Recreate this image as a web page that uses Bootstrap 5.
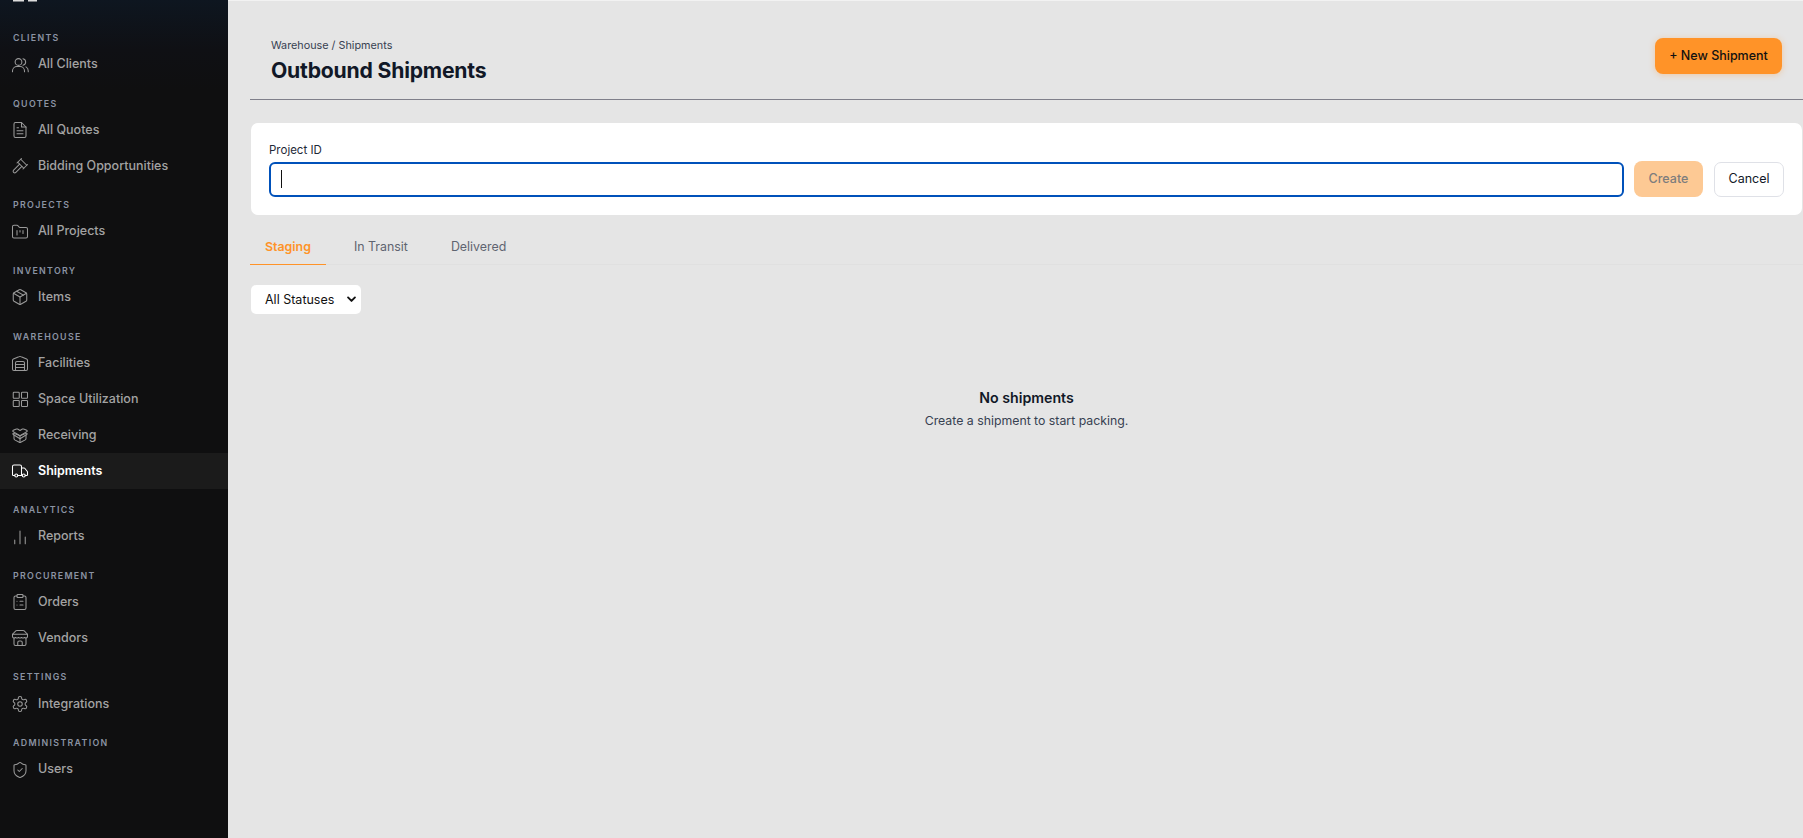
<!DOCTYPE html>
<html lang="en">
<head>
    <meta charset="UTF-8">
    <meta name="viewport" content="width=device-width, initial-scale=1.0">
    <title>Outbound Shipments</title>
    <link href="https://cdn.jsdelivr.net/npm/bootstrap@5.3.0/dist/css/bootstrap.min.css" rel="stylesheet">
    <style>
        html, body { height: 100%; }
        body { font-family: Inter, "Liberation Sans", sans-serif; background: #e5e5e5; color: #111827; overflow: hidden; }
        .app-side { width: 228px; height: 100vh; background: linear-gradient(180deg, #0e1620 0, #0f1014 50px, #0f0f10 90px); }
        .side-brand { height: 30px; padding-left: 13px; }
        .side-group { margin-bottom: 13.15px; }
        .side-label { height: 16.5px; line-height: 15px; padding-left: 13px; font-size: 8.8px; font-weight: 600; letter-spacing: .15em; color: #8b93a3; text-transform: uppercase; }
        .side-item { height: 36px; padding-left: 11px; gap: 9px; font-size: 12.5px; font-weight: 500; color: #a3a3a3; text-decoration: none; }
        .side-item svg { width: 18px; height: 18px; flex: none; fill: none; stroke: currentColor; stroke-width: 1.4; stroke-linecap: round; stroke-linejoin: round; color: #9a9a9a; }
        .side-item.is-active { background: #1b1b1b; color: #fff; font-weight: 600; }
        .side-item.is-active svg { color: #fff; }
        .app-main { padding: 1px 0 0 22px; border-top: 1px solid #f2f2f2; min-width: 0; }
        .page-head { height: 98px; padding: 36px 21px 0 21px; border-bottom: 1px solid #7f7f8a; }
        .crumbs { font-size: 10.8px; line-height: 16px; margin-bottom: 1px; color: #374151; }
        .page-title { font-size: 21.2px; font-weight: 700; line-height: 30px; color: #111827; margin: 0; letter-spacing: -.01em; }
        .btn-ship { width: 127px; height: 36px; margin-top: 0; padding: 0; background: #ff9328; border: 0; border-radius: 8px; color: #111; font-size: 12.5px; font-weight: 500; box-shadow: 0 1px 6px rgba(255, 147, 40, .35); }
        .btn-ship:hover { background: #ff9328; color: #111; }
        .create-box { margin: 23px 1px 0 1px; height: 92px; padding: 19px 18px 0 18px; background: #fff; border-radius: 7px; }
        .create-box label { display: block; font-size: 11.5px; line-height: 16px; margin-bottom: 3px; color: #1f2937; }
        .input-wrap { flex: 1 1 auto; position: relative; }
        .input-wrap .form-control { height: 35px; border: 2px solid #0051ba; border-radius: 6px; box-shadow: none; }
        .fake-caret { position: absolute; left: 12px; top: 8px; width: 1px; height: 18px; background: #111; }
        .btn-create { width: 69px; height: 36px; margin-left: 10px; padding: 0; background: #fdc994; border: 0; border-radius: 8px; color: #7d7d7d; font-size: 12.5px; font-weight: 500; }
        .btn-create:disabled { background: #fdc994; color: #7d7d7d; opacity: 1; }
        .btn-cancel { width: 70px; height: 35px; margin-left: 11px; padding: 0; background: #fff; border: 1px solid #dfe1e7; border-radius: 7px; color: #111827; font-size: 12.5px; }
        .tab-row { margin-top: 14px; height: 36px; border-bottom: 1px solid #e0e0e0; }
        .tab-link { height: 36px; padding: 0 15px; font-size: 12.4px; line-height: 35px; font-weight: 400; color: #5f6470; text-decoration: none; margin-right: 13px; }
        .tab-link.is-on { color: #ff9328; font-weight: 600; border-bottom: 1px solid #ff9328; }
        .status-pick { display: block; width: 110px; height: 29px; margin: 20px 0 0 1px; padding: 2px 0 0 14px; border: 0; border-radius: 5px; font-size: 12.5px; color: #111; box-shadow: none;
            background-image: url("data:image/svg+xml,%3csvg xmlns='http://www.w3.org/2000/svg' viewBox='0 0 16 16'%3e%3cpath fill='none' stroke='%23111' stroke-linecap='round' stroke-linejoin='round' stroke-width='2.8' d='m3 5 5 5 5-5'/%3e%3c/svg%3e");
            background-position: right 4px center; background-size: 11px 11px; }
        .empty-note { margin-top: 74px; text-align: center; }
        .empty-note h6 { font-size: 14.2px; font-weight: 600; line-height: 20px; margin: 0 0 3px; color: #111827; }
        .empty-note p { font-size: 12.3px; line-height: 20px; margin: 0; color: #374151; }
    </style>
</head>
<body>
    <div class="d-flex">
        <nav class="app-side flex-shrink-0">
            <div class="side-brand">
                <svg width="24" height="2" class="d-block"><rect width="11" height="1.5" fill="#ddd"/><rect x="15" width="9" height="1.5" fill="#ddd"/></svg>
            </div>

            <div class="side-group">
                <div class="side-label">Clients</div>
                <a class="side-item d-flex align-items-center" href="#"><svg viewBox="0 0 24 24"><circle cx="10" cy="8" r="4.5"/><path d="M2 21v-1a6 6 0 0 1 6-6h4a6 6 0 0 1 6 6v1"/><path d="M16 3.600a4.500 4.500 0 0 1 0 8.800"/><path d="M20 14.500a6 6 0 0 1 3 5.500v1"/></svg>All Clients</a>
            </div>
            <div class="side-group">
                <div class="side-label">Quotes</div>
                <a class="side-item d-flex align-items-center" href="#"><svg viewBox="0 0 24 24"><path d="M14 2H6a2 2 0 0 0-2 2v16a2 2 0 0 0 2 2h12a2 2 0 0 0 2-2V8z"/><path d="M14 2v6h6"/><path d="M8 13h8M8 17h8M8 9h2"/></svg>All Quotes</a>
                <a class="side-item d-flex align-items-center" href="#"><svg viewBox="0 0 24 24"><path d="m14.500 12.500-8 8a2.100 2.100 0 0 1-3-3l8-8"/><path d="m16 16 6-6"/><path d="m8 8 6-6"/><path d="m9 7 8 8"/><path d="m21 11-8-8"/></svg>Bidding Opportunities</a>
            </div>
            <div class="side-group">
                <div class="side-label">Projects</div>
                <a class="side-item d-flex align-items-center" href="#"><svg viewBox="0 0 24 24"><path d="M20 20a2 2 0 0 0 2-2V8a2 2 0 0 0-2-2h-7.900a2 2 0 0 1-1.700-.9l-.8-1.200A2 2 0 0 0 7.900 3H4a2 2 0 0 0-2 2v13a2 2 0 0 0 2 2Z"/><path d="M8 10v6M12 10v2M16 10v4"/></svg>All Projects</a>
            </div>
            <div class="side-group">
                <div class="side-label">Inventory</div>
                <a class="side-item d-flex align-items-center" href="#"><svg viewBox="0 0 24 24"><path d="M21 8a2 2 0 0 0-1-1.700l-7-4a2 2 0 0 0-2 0l-7 4A2 2 0 0 0 3 8v8a2 2 0 0 0 1 1.700l7 4a2 2 0 0 0 2 0l7-4a2 2 0 0 0 1-1.700Z"/><path d="m3.300 7 8.700 5 8.700-5"/><path d="M12 22V12"/><path d="m7.500 4.300 9 5.200"/></svg>Items</a>
            </div>
            <div class="side-group">
                <div class="side-label">Warehouse</div>
                <a class="side-item d-flex align-items-center" href="#"><svg viewBox="0 0 24 24"><path d="M22 8.400V20a2 2 0 0 1-2 2H4a2 2 0 0 1-2-2V8.400a2 2 0 0 1 1.200-1.800l8-3.200a2 2 0 0 1 1.600 0l8 3.200A2 2 0 0 1 22 8.400Z"/><path d="M6 22V12a2 2 0 0 1 2-2h8a2 2 0 0 1 2 2v10"/><path d="M6 14h12M6 18h12"/></svg>Facilities</a>
                <a class="side-item d-flex align-items-center" href="#"><svg viewBox="0 0 24 24"><rect x="3" y="3" width="8" height="8" rx="1"/><rect x="14" y="3" width="8" height="8" rx="1"/><rect x="14" y="14" width="8" height="8" rx="1"/><rect x="3" y="14" width="8" height="8" rx="1"/></svg>Space Utilization</a>
                <a class="side-item d-flex align-items-center" href="#"><svg viewBox="0 0 24 24"><path d="M12 22v-9"/><path d="M15.200 4.100a2 2 0 0 1 1.600-.1L21 5.700a1 1 0 0 1 .1 1.800L12 13 2.900 7.500a1 1 0 0 1 .1-1.800L7.200 4a2 2 0 0 1 1.600.1L12 6z"/><path d="M20 12.500v4.300a2 2 0 0 1-1 1.700L13 21.700a2 2 0 0 1-2 0l-6-3.200a2 2 0 0 1-1-1.700v-4.300"/><path d="M21 11.300a1 1 0 0 0-.1-1.800L12 13 3.100 9.500a1 1 0 0 0-.1 1.800L12 17l9-5.700z"/></svg>Receiving</a>
                <a class="side-item is-active d-flex align-items-center" href="#"><svg viewBox="0 0 24 24"><path d="M14 18V6a2 2 0 0 0-2-2H4a2 2 0 0 0-2 2v11a1 1 0 0 0 1 1h2"/><path d="M15 18H9"/><path d="M19 18h2a1 1 0 0 0 1-1v-3.650a1 1 0 0 0-.22-.624l-3.480-4.350A1 1 0 0 0 17.520 8H14"/><circle cx="17" cy="18" r="2"/><circle cx="7" cy="18" r="2"/></svg>Shipments</a>
            </div>
            <div class="side-group">
                <div class="side-label">Analytics</div>
                <a class="side-item d-flex align-items-center" href="#"><svg viewBox="0 0 24 24"><path d="M12 21V4M19 21v-9M5 21v-5"/></svg>Reports</a>
            </div>
            <div class="side-group">
                <div class="side-label">Procurement</div>
                <a class="side-item d-flex align-items-center" href="#"><svg viewBox="0 0 24 24"><rect x="8" y="2" width="8" height="4" rx="1"/><path d="M16 4h2a2 2 0 0 1 2 2v14a2 2 0 0 1-2 2H6a2 2 0 0 1-2-2V6a2 2 0 0 1 2-2h2"/><path d="M12 11h4M12 16h4M8 11h.01M8 16h.01"/></svg>Orders</a>
                <a class="side-item d-flex align-items-center" href="#"><svg viewBox="0 0 24 24"><path d="m2 7 4.400-4.400A2 2 0 0 1 7.800 2h8.400a2 2 0 0 1 1.400.6L22 7"/><path d="M4 12v8a2 2 0 0 0 2 2h12a2 2 0 0 0 2-2v-8"/><path d="M15 22v-4a2 2 0 0 0-2-2h-2a2 2 0 0 0-2 2v4"/><path d="M2 7h20"/><path d="M22 7v3a2 2 0 0 1-2 2 2.700 2.700 0 0 1-1.600-.6.700.700 0 0 0-.8 0 2.700 2.700 0 0 1-3.200 0 .700.700 0 0 0-.8 0 2.700 2.700 0 0 1-3.200 0 .700.700 0 0 0-.8 0 2.700 2.700 0 0 1-3.200 0 .700.700 0 0 0-.8 0A2.700 2.700 0 0 1 4 12a2 2 0 0 1-2-2V7"/></svg>Vendors</a>
            </div>
            <div class="side-group">
                <div class="side-label">Settings</div>
                <a class="side-item d-flex align-items-center" href="#"><svg viewBox="0 0 24 24"><path d="M12.220 2h-.44a2 2 0 0 0-2 2v.18a2 2 0 0 1-1 1.730l-.43.25a2 2 0 0 1-2 0l-.15-.08a2 2 0 0 0-2.730.73l-.22.38a2 2 0 0 0 .73 2.730l.15.1a2 2 0 0 1 1 1.720v.51a2 2 0 0 1-1 1.740l-.15.09a2 2 0 0 0-.73 2.730l.22.38a2 2 0 0 0 2.730.73l.15-.08a2 2 0 0 1 2 0l.43.25a2 2 0 0 1 1 1.730V20a2 2 0 0 0 2 2h.44a2 2 0 0 0 2-2v-.18a2 2 0 0 1 1-1.730l.43-.25a2 2 0 0 1 2 0l.15.08a2 2 0 0 0 2.730-.73l.22-.39a2 2 0 0 0-.73-2.730l-.15-.08a2 2 0 0 1-1-1.740v-.5a2 2 0 0 1 1-1.740l.15-.09a2 2 0 0 0 .73-2.730l-.22-.38a2 2 0 0 0-2.730-.73l-.15.08a2 2 0 0 1-2 0l-.43-.25a2 2 0 0 1-1-1.730V4a2 2 0 0 0-2-2z"/><circle cx="12" cy="12" r="3"/></svg>Integrations</a>
            </div>
            <div class="side-group">
                <div class="side-label">Administration</div>
                <a class="side-item d-flex align-items-center" href="#"><svg viewBox="0 0 24 24"><path d="M20 13c0 5-3.500 7.500-7.660 8.950a1 1 0 0 1-.67-.01C7.500 20.500 4 18 4 13V6a1 1 0 0 1 1-1c2 0 4.500-1.200 6.240-2.720a1.170 1.170 0 0 1 1.520 0C14.510 3.810 17 5 19 5a1 1 0 0 1 1 1z"/><path d="m9 12 2 2 4-4"/></svg>Users</a>
            </div>
        </nav>

        <main class="app-main flex-grow-1">
            <header class="page-head d-flex justify-content-between align-items-start">
                <div>
                    <div class="crumbs">Warehouse / Shipments</div>
                    <h1 class="page-title">Outbound Shipments</h1>
                </div>
                <button class="btn btn-ship" type="button">+ New Shipment</button>
            </header>

            <section class="create-box">
                <label for="projectId">Project ID</label>
                <div class="d-flex align-items-center">
                    <div class="input-wrap">
                        <input id="projectId" class="form-control" type="text">
                        <span class="fake-caret"></span>
                    </div>
                    <button class="btn btn-create" type="button" disabled>Create</button>
                    <button class="btn btn-cancel" type="button">Cancel</button>
                </div>
            </section>

            <div class="tab-row d-flex">
                <a class="tab-link is-on" href="#">Staging</a>
                <a class="tab-link" href="#">In Transit</a>
                <a class="tab-link" href="#">Delivered</a>
            </div>

            <select class="form-select status-pick">
                <option>All Statuses</option>
                <option>Pending</option>
                <option>Packed</option>
            </select>

            <div class="empty-note">
                <h6>No shipments</h6>
                <p>Create a shipment to start packing.</p>
            </div>
        </main>
    </div>
    <script src="https://cdn.jsdelivr.net/npm/bootstrap@5.3.0/dist/js/bootstrap.bundle.min.js"></script>
</body>
</html>
